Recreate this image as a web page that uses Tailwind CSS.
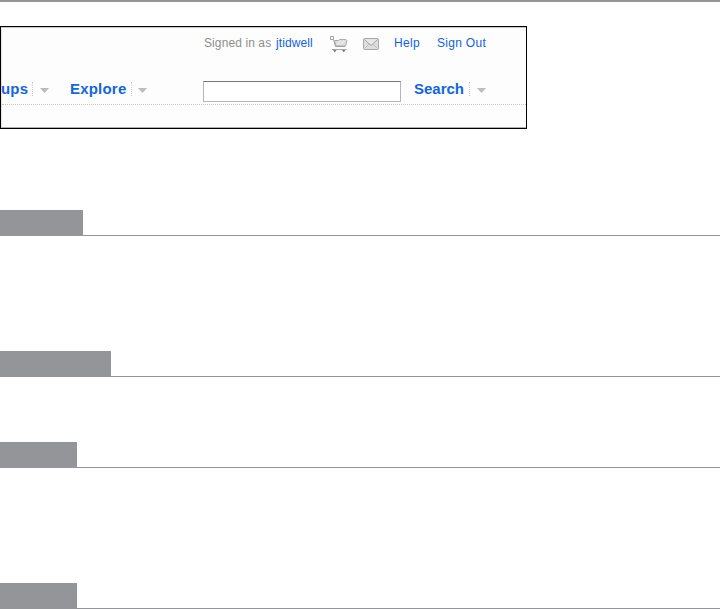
<!DOCTYPE html>
<html lang="en">
<head>
  <meta charset="UTF-8" />
  <meta name="viewport" content="width=device-width, initial-scale=1.0" />
  <title>Sign-in tools</title>
  <script src="https://cdn.jsdelivr.net/npm/@tailwindcss/browser@4"></script>
</head>
<body class="bg-white h-[609px] overflow-hidden font-['Liberation_Sans',Arial,sans-serif]">

  <div class="h-0.5 bg-[#939598]"></div>

  <!-- Site header -->
  <header class="mt-6 w-[527px] h-[103px] border border-black bg-[#fdfdfd] overflow-hidden">
    <div class="h-full border-t border-l border-b border-t-[#c4c4c4] border-l-[#e4e4e4] border-b-[#b0b0b0]">

      <!-- Sign-in tools -->
      <div class="flex items-center h-[30px] pl-[202px] text-[12px] leading-[30px] whitespace-nowrap text-[#0f62e6]">
        <span class="w-[72px] text-[#8e8e8e] tracking-[0.1px]">Signed in as</span>
        <a class="w-[54px] tracking-[0.1px]">jtidwell</a>
        <svg class="w-[18px] h-[17px] mt-0.5 mr-[15px] shrink-0" viewBox="0 0 18 17" fill="none">
          <path d="M4.500 4.500h4l1-1h6.500l1 1-1.500 5.500H6z" fill="#dcdcdc" stroke="#adadad" />
          <path d="M7 9l3.500-4M10.500 9l3.500-4.500" stroke="#f6f6f6" />
          <path d="M.5.5h3v3h-3zM3.500 3.500l2 7h9.500" stroke="#a2a2a2" />
          <path d="M2 13.500h14.500" stroke="#a6a6a6" />
          <path d="M3 14h3.500l-1.750 2.500zM12 14h3.500l-1.750 2.500z" fill="#7c7c7c" />
        </svg>
        <svg class="w-[16px] h-[12px] mt-0.5 mr-[15px] shrink-0" viewBox="0 0 16 12" fill="none">
          <rect x=".5" y=".5" width="15" height="11" rx="1" fill="#dedede" stroke="#a8a8a8" />
          <path d="M1.500 10.500l4.500-4.500M14.500 10.500L10 6" stroke="#bcbcbc" />
          <path d="M1.500 1.500L8 7.500l6.500-6" fill="#e8e8e8" stroke="#a2a2a2" />
        </svg>
        <a class="w-[43px] tracking-[0.3px]">Help</a>
        <a class="tracking-[0.3px]">Sign Out</a>
      </div>

      <!-- Navigation and search -->
      <div class="flex items-start h-[46px] pt-[23px] text-[15px] leading-[16px] font-bold whitespace-nowrap text-[#1266e0]">
        <a class="w-[31px] -ml-px tracking-[0.2px]">ups</a>
        <span class="h-3.5 mt-px border-l border-dotted border-[#ccc]"></span>
        <svg class="w-[9px] h-[5px] ml-[7px] mt-[7px]" viewBox="0 0 9 5"><path d="M0 0h9L4.500 5z" fill="#bcbcbc" /></svg>
        <a class="w-[61px] ml-[21px] tracking-[0.2px]">Explore</a>
        <span class="h-3.5 mt-px border-l border-dotted border-[#ccc]"></span>
        <svg class="w-[9px] h-[5px] ml-1.5 mt-[7px]" viewBox="0 0 9 5"><path d="M0 0h9L4.500 5z" fill="#bcbcbc" /></svg>
        <input type="text" class="w-[198px] h-[21px] ml-14 border bg-white border-[#b4b4bc] border-t-[#777]" />
        <a class="w-[55px] ml-[13px]">Search</a>
        <span class="h-3.5 mt-px border-l border-dotted border-[#ccc]"></span>
        <svg class="w-[9px] h-[5px] ml-[7px] mt-[7px]" viewBox="0 0 9 5"><path d="M0 0h9L4.500 5z" fill="#bcbcbc" /></svg>
      </div>
      <div class="border-t border-dotted border-[#c8c8c8]"></div>
    </div>
  </header>

  <!-- Section headings -->
  <div class="mt-[81px] h-[26px] border-b border-[#939598]">
    <div class="w-[83px] h-[26px] bg-[#939598]"></div>
  </div>
  <div class="mt-[115px] h-[26px] border-b border-[#939598]">
    <div class="w-[111px] h-[26px] bg-[#939598]"></div>
  </div>
  <div class="mt-[65px] h-[26px] border-b border-[#939598]">
    <div class="w-[77px] h-[26px] bg-[#939598]"></div>
  </div>
  <div class="mt-[115px] h-[26px] border-b border-[#939598]">
    <div class="w-[77px] h-[26px] bg-[#939598]"></div>
  </div>

</body>
</html>
